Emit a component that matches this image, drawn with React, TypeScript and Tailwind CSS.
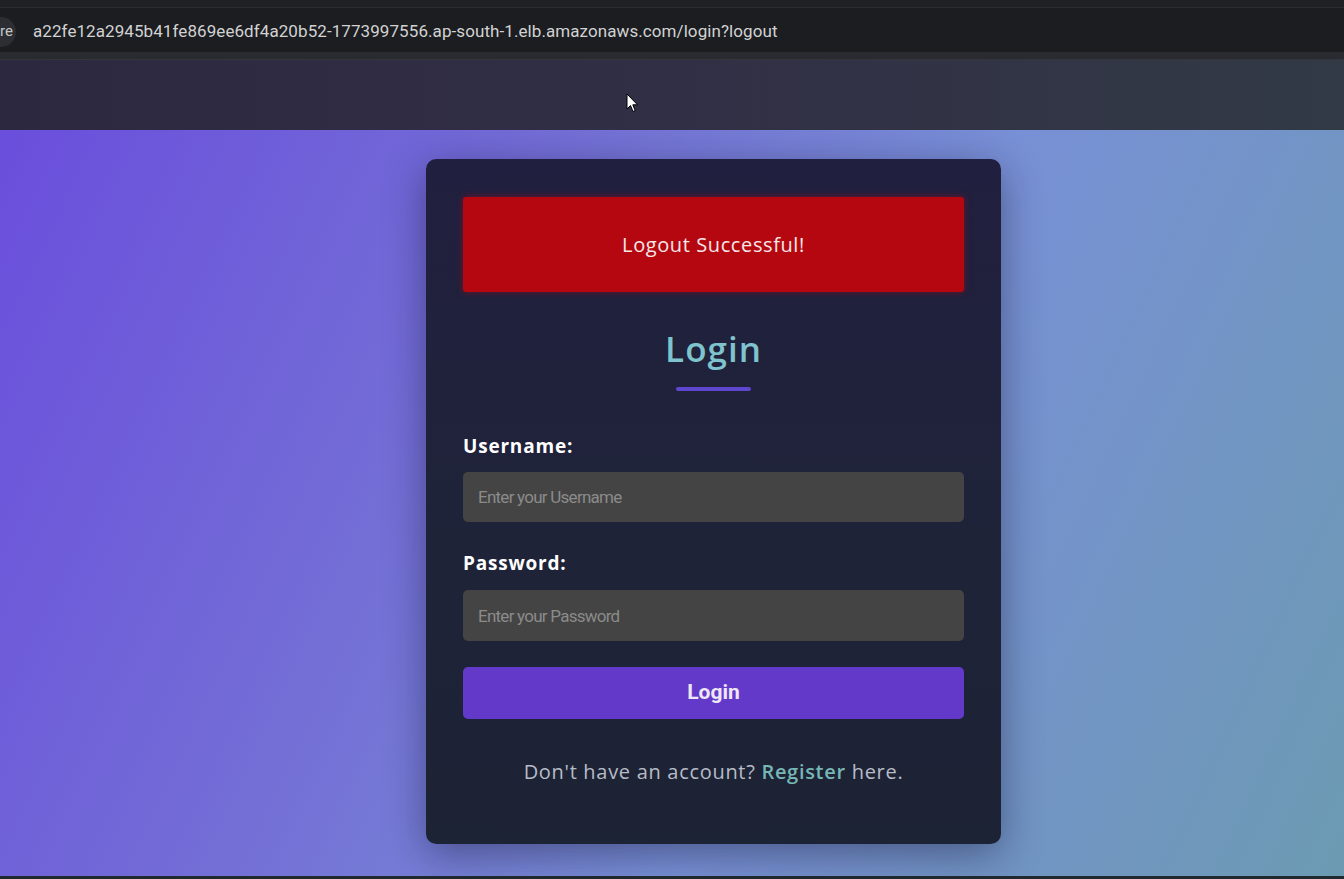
import React from 'react'

export default function App() {
  return (
    <div className="w-[1344px] h-[879px] overflow-hidden flex flex-col bg-[#1d1e22] font-['Open_Sans',sans-serif]">
      {/* Browser chrome */}
      <div className="h-[8px] bg-[#202124] border-b border-[#2c2d31]" />
      <div className="h-[44px] bg-[#1b1d21] flex items-center pt-[3px]">
        <div className="h-[30px] w-[22px] -ml-[6px] rounded-r-full bg-[#2c2e33] flex items-center justify-end pr-[3px] text-[15px] text-[#c6c6c6] font-['Roboto',sans-serif]">
          re
        </div>
        <span className="ml-[17px] text-[17px] text-[#d2d2d2] font-['Roboto',sans-serif] tracking-[0.08px]">
          a22fe12a2945b41fe869ee6df4a20b52-1773997556.ap-south-1.elb.amazonaws.com/login?logout
        </span>
      </div>
      <div className="h-[8px] bg-[#2a2b30] border-b border-[#34353b]" />
      <div className="h-[70px] bg-gradient-to-r from-[#2c2840] via-[#312f45] to-[#323a46] relative">
        <svg className="absolute left-[626px] top-[33px]" width="13" height="20" viewBox="0 0 13 20">
          <path d="M1 1 L1 16 L4.5 12.5 L7 18.5 L9.2 17.6 L6.8 11.8 L11.5 11.8 Z" fill="#fff" stroke="#000" strokeWidth="1" />
        </svg>
      </div>

      {/* Page */}
      <div className="flex-1 bg-[linear-gradient(115deg,#6a4edc_0%,#7470d6_35%,#7890d6_60%,#6c9ab2_100%)] flex justify-center pl-[83px] pt-[29px]">
        <div className="w-[575px] h-[685px] rounded-[10px] bg-gradient-to-b from-[#211f3f] via-[#1f2339] to-[#1c2334] shadow-[0_10px_40px_rgba(20,20,50,0.45)] px-[37px] pt-[38px] flex flex-col">
          <div className="h-[95px] bg-[#b5070f] rounded-[3px] flex items-center justify-center text-[20px] tracking-[0.6px] text-[#f6e8ea] shadow-[0_0_6px_rgba(200,0,20,0.5)]">
            Logout Successful!
          </div>

          <h1 className="mt-[35px] text-center text-[35px] leading-[44px] tracking-[1px] font-semibold text-[#7ec3cd]">
            Login
          </h1>
          <div className="mx-auto mt-[16px] w-[75px] h-[4px] rounded-full bg-[#5f46cf]" />

          <label className="mt-[43px] text-[19px] leading-[24px] tracking-[0.8px] font-bold text-white">Username:</label>
          <input
            placeholder="Enter your Username"
            className="mt-[14px] h-[50px] rounded-[5px] bg-[#444444] px-[15px] text-[17px] tracking-[-0.75px] text-white placeholder:text-[#8b8b8b] font-['Roboto',sans-serif] outline-none"
          />

          <label className="mt-[29px] text-[19px] leading-[24px] tracking-[0.8px] font-bold text-white">Password:</label>
          <input
            type="password"
            placeholder="Enter your Password"
            className="mt-[15px] h-[51px] rounded-[5px] bg-[#444444] px-[15px] text-[17px] tracking-[-0.75px] text-white placeholder:text-[#8b8b8b] font-['Roboto',sans-serif] outline-none"
          />

          <button className="mt-[26px] h-[52px] rounded-[5px] bg-[#6239c9] text-[21px] font-bold text-[#efe6f5] font-['Roboto',sans-serif]">
            Login
          </button>

          <p className="mt-[38px] text-center text-[20px] tracking-[0.7px] text-[#b7bcc8]">
            Don't have an account? <span className="font-semibold text-[#76b6b4]">Register</span> here.
          </p>
        </div>
      </div>
      <div className="h-[3px] bg-[#1e2a30]" />
    </div>
  )
}
